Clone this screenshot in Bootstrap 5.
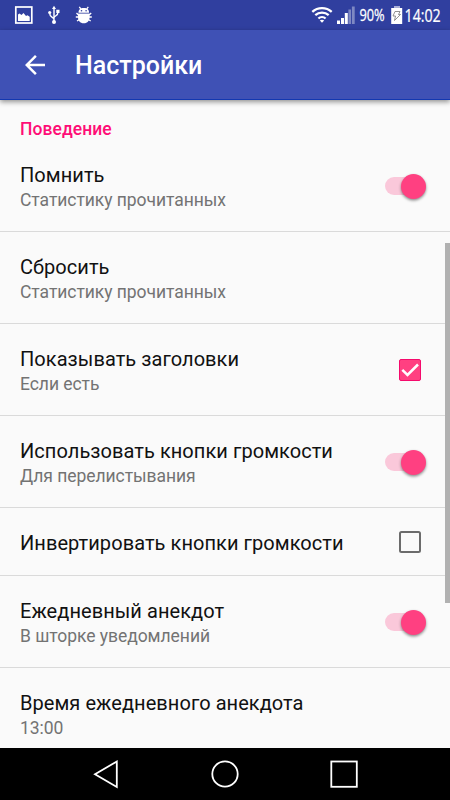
<!DOCTYPE html>
<html lang="ru">
<head>
<meta charset="utf-8">
<meta name="viewport" content="width=device-width, initial-scale=1">
<title>Настройки</title>
<link href="https://cdn.jsdelivr.net/npm/bootstrap@5.3.0/dist/css/bootstrap.min.css" rel="stylesheet">
<style>
  body { font-family: Roboto, "Noto Sans", sans-serif; background: #fafafa; }
  svg { display: block; flex: none; }
  .screen { width: 450px; height: 800px; }
  .statusbar { height: 30px; background: #303f9f; padding: 0 0 0 14px; }
  .status-text { font-family: "Open Sans", sans-serif; fill: #fff; stroke: #fff; stroke-width: .25px; }
  .appbar { height: 70px; background: #3f51b5; padding: 0 20px; border-bottom: 1px solid #1338b0; box-shadow: 0 2px 5px rgba(0,0,0,.42); z-index: 2; }
  .appbar-title { font-size: 25px; font-weight: 500; line-height: 30px; margin: 3px 0 0 25px; }
  .category { height: 40px; padding: 18px 20px 0; font-size: 17.5px; line-height: 22px; font-weight: 500; letter-spacing: .06px; color: #ff0d76; }
  .pref { height: 92px; padding: 2px 24px 0 20px; border-bottom: 1px solid #dadada; border-radius: 0; }
  .pref-one { height: 68px; }
  .pref-name { font-size: 20px; line-height: 26px; letter-spacing: .06px; color: #111; }
  .pref-note { font-size: 17.5px; line-height: 24px; letter-spacing: -.05px; color: #737373; }
  .toggle { width: 41px; height: 18px; margin-bottom: 1px; border-radius: 9px; background: linear-gradient(90deg, #fac8da 28px, transparent 28px); }
  .thumb { width: 25px; height: 25px; background: #ff4081; box-shadow: 0 1.5px 3px rgba(0,0,0,.45); }
  .check { width: 22px; height: 22px; margin: 0 5px 2px 0; }
  .scroll-thumb { top: 143px; right: 0; width: 5px; height: 360px; background: #b1b1b1; }
  .navkeys { height: 52px; background: #000; }
</style>
</head>
<body>
<div class="screen d-flex flex-column overflow-hidden">
  <header class="statusbar d-flex align-items-center justify-content-between flex-shrink-0">
    <svg width="80" height="30" viewBox="0 0 80 30">
      <rect x="1.800" y="7" width="16" height="16" fill="none" stroke="#fff" stroke-width="1.700"/>
      <path d="M4 21v-6.500l1.500-1 2 1.500 2-2 2.500 3 1.500-.8 2.200 1.500V21z" fill="#fff"/>
      <g stroke="#fff" fill="none" stroke-width="1.400"><path d="M40 8v14M40 19.500c0-2.500-4.300-2-4.300-6M40 18c0-2.500 4-1.500 4-6"/></g>
      <path d="M40 5.800l-2 3.200h4zM42.300 9.800h3.200v3.200h-3.200z" fill="#fff"/><circle cx="35.700" cy="12.500" r="1.600" fill="#fff"/><circle cx="40" cy="22" r="2" fill="#fff"/>
      <path d="M64.500 12.700c0-3 1.500-4.700 5.300-4.700s5.300 1.700 5.300 4.700zM64 13.700h11.600v3.300c0 3.500-2 6.300-5.800 6.300s-5.800-2.800-5.800-6.300z" fill="#fff"/>
      <path d="M65.300 6.800l1.500 2M74.300 6.800l-1.500 2M62.500 13l1.500 1.500h11.600l1.600-1.500M61.800 17h16M63 21l2.500-1.500h8.700l2.500 1.500" stroke="#fff" stroke-width="1.300" fill="none"/>
      <circle cx="67.500" cy="10.700" r=".8" fill="#303f9f"/><circle cx="72.100" cy="10.700" r=".8" fill="#303f9f"/>
    </svg>
    <svg width="140" height="30" viewBox="310 0 140 30">
      <g fill="none" stroke="#fff" stroke-width="2.300"><path d="M312.300 11.800a14.500 14.500 0 0 1 19.400 0M315.300 15.200a10 10 0 0 1 13.400 0M318.400 18.500a5.300 5.300 0 0 1 7.200 0"/></g>
      <path d="M319.800 20.500q2.200-1.500 4.400 0L322 22.800z" fill="#fff"/>
      <path d="M337 20.500h3v3.500h-3zM341 18h3v6h-3zM344.800 13h3v11h-3z" fill="#fff"/>
      <path d="M348.400 9.500h2.600V24h-2.600zM351.900 6.500h2.800V24h-2.800z" fill="#fff" opacity=".38"/>
      <text class="status-text" transform="translate(359.500 20.500) scale(.8 1)" font-size="16">90%</text>
      <path d="M394 6h6v2h-6z" fill="#a8aed8"/><path d="M391.200 8h11v16h-11z" fill="#fff"/>
      <path d="M395 11.500h5l-1.500 3h2l-6 6 1-4.500h-2.500z" fill="none" stroke="#777" stroke-width=".8"/>
      <text class="status-text" transform="translate(404.500 22) scale(.79 1)" font-size="18">14:02</text>
    </svg>
  </header>

  <nav class="appbar d-flex align-items-center text-white flex-shrink-0 position-relative">
    <svg width="30" height="30" viewBox="0 0 24 24" fill="#fff"><path d="M20 11H7.830l5.590-5.590L12 4l-8 8 8 8 1.410-1.410L7.830 13H20v-2z"/></svg>
    <h1 class="appbar-title">Настройки</h1>
  </nav>

  <main class="flex-grow-1 overflow-hidden position-relative">
    <div class="category">Поведение</div>
    <div class="pref d-flex align-items-center justify-content-between">
      <div><div class="pref-name">Помнить</div><div class="pref-note">Статистику прочитанных</div></div>
      <div class="toggle d-flex align-items-center justify-content-end"><span class="thumb rounded-circle flex-shrink-0"></span></div>
    </div>
    <div class="pref d-flex align-items-center">
      <div><div class="pref-name">Сбросить</div><div class="pref-note">Статистику прочитанных</div></div>
    </div>
    <div class="pref d-flex align-items-center justify-content-between">
      <div><div class="pref-name">Показывать заголовки</div><div class="pref-note">Если есть</div></div>
      <svg class="check" viewBox="0 0 22 22"><rect x=".5" y=".5" width="21" height="21" rx="1.500" fill="#ff4081" stroke="#f50a6c"/><path d="M3.300 10.800l5.200 5.200L19 5.500" fill="none" stroke="#fff" stroke-width="2.500"/></svg>
    </div>
    <div class="pref d-flex align-items-center justify-content-between">
      <div><div class="pref-name">Использовать кнопки громкости</div><div class="pref-note">Для перелистывания</div></div>
      <div class="toggle d-flex align-items-center justify-content-end"><span class="thumb rounded-circle flex-shrink-0"></span></div>
    </div>
    <div class="pref pref-one d-flex align-items-center justify-content-between">
      <div class="pref-name">Инвертировать кнопки громкости</div>
      <svg class="check" viewBox="0 0 22 22"><rect x="1" y="1" width="20" height="20" rx="1.500" fill="none" stroke="#6b6b6b" stroke-width="2"/></svg>
    </div>
    <div class="pref d-flex align-items-center justify-content-between">
      <div><div class="pref-name">Ежедневный анекдот</div><div class="pref-note">В шторке уведомлений</div></div>
      <div class="toggle d-flex align-items-center justify-content-end"><span class="thumb rounded-circle flex-shrink-0"></span></div>
    </div>
    <div class="pref d-flex align-items-center">
      <div><div class="pref-name">Время ежедневного анекдота</div><div class="pref-note">13:00</div></div>
    </div>
    <div class="scroll-thumb position-absolute"></div>
  </main>

  <footer class="navkeys flex-shrink-0">
    <svg width="450" height="52" viewBox="0 0 450 52" fill="none" stroke="#fff" stroke-width="1.800">
      <path d="M116.800 13.500v25.500L95 26.200z"/><circle cx="225" cy="26" r="12.700"/><rect x="331.300" y="13.500" width="25.500" height="25.300"/>
    </svg>
  </footer>
</div>
<script src="https://cdn.jsdelivr.net/npm/bootstrap@5.3.0/dist/js/bootstrap.bundle.min.js"></script>
</body>
</html>
